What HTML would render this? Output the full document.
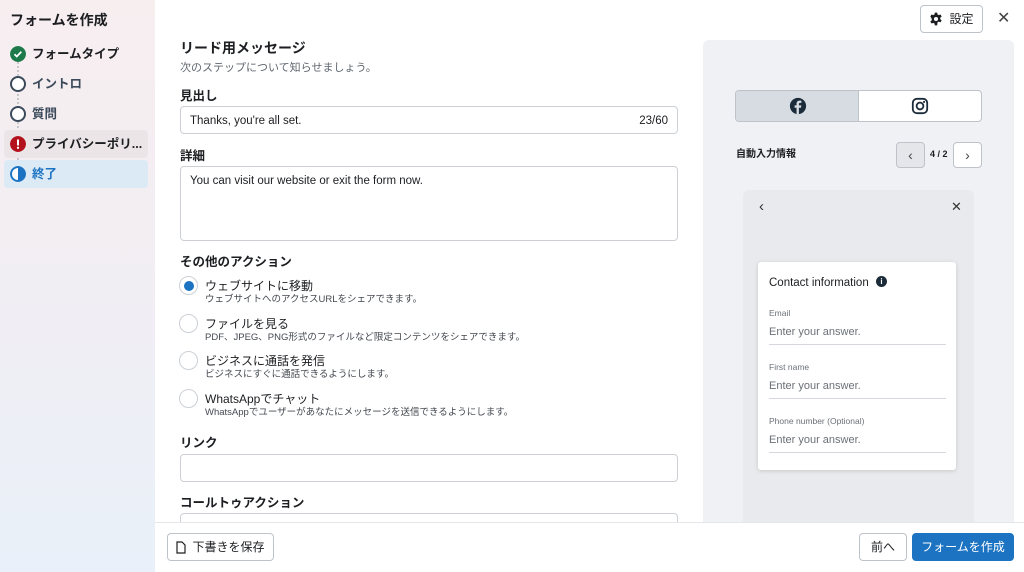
<!DOCTYPE html>
<html><head><meta charset="utf-8"><style>
*{box-sizing:border-box;margin:0;padding:0}
body{width:1024px;height:572px;overflow:hidden;background:#fff;font-family:"Liberation Sans","Noto Sans CJK JP",sans-serif;color:#1c1e21;position:relative;line-height:1.2}
.abs{position:absolute}
.side{left:0;top:0;width:155px;height:572px;background:linear-gradient(180deg,#f7eef0 0%,#f1eef3 50%,#e9f0f9 100%)}
.side h1{position:absolute;left:10px;top:11px;font-size:14px;font-weight:bold;line-height:18px}
.step{position:absolute;left:4px;width:144px;height:28px;font-size:12.5px;font-weight:bold;color:#1c1e21;border-radius:4px;line-height:28px;padding-left:28px}
.step .ic{position:absolute;left:6px;top:6px;width:16px;height:16px;border-radius:50%}
.in{border:2px solid #3b4a5a;background:#fff}
.lbl{font-size:12.5px;font-weight:bold;line-height:15px}
.inp{border:1px solid #ccd0d5;border-radius:4px;background:#fff}
.radio{width:19px;height:19px;border-radius:50%;border:1px solid #ccd0d5;background:#fff}
.rt{font-size:12px;color:#1c1e21;line-height:14px}
.rs{font-size:9.5px;color:#444950;margin-top:1px;line-height:12px}
.btn{border:1px solid #bec3c9;border-radius:4px;background:#fff;font-size:12px;display:flex;align-items:center;justify-content:center}
.fl{font-size:8.5px;color:#6b7178}
.ph{font-size:11px;color:#6b7178}
.ln{height:1px;background:#d5d8dc}
</style></head><body>
<div class="abs side">
<h1>フォームを作成</h1>
<div class="abs" style="left:17px;top:62px;height:110px;border-left:2px dotted #c8c8cc"></div>
<div class="step" style="top:40px"><svg class="ic" viewBox="0 0 16 16"><circle cx="8" cy="8" r="8" fill="#1f7a4b"/><path d="M4.5 8.2l2.3 2.3 4.5-4.8" fill="none" stroke="#fff" stroke-width="1.8"/></svg>フォームタイプ</div>
<div class="step" style="top:70px;color:#3b4a5a"><div class="ic in"></div>イントロ</div>
<div class="step" style="top:100px;color:#3b4a5a"><div class="ic in"></div>質問</div>
<div class="step" style="top:130px;background:#ebe5e8"><svg class="ic" viewBox="0 0 16 16"><circle cx="8" cy="8" r="8" fill="#b3121d"/><rect x="7" y="3.5" width="2" height="6" fill="#fff"/><rect x="7" y="10.8" width="2" height="2" fill="#fff"/></svg>プライバシーポリ...</div>
<div class="step" style="top:160px;background:#dceaf6;color:#1b73c2"><svg class="ic" viewBox="0 0 16 16"><circle cx="8" cy="8" r="7" fill="#fff" stroke="#1b73c2" stroke-width="2"/><path d="M8 1a7 7 0 010 14z" fill="#1b73c2"/></svg>終了</div>
</div>

<div class="abs" style="left:180px;top:40px;font-size:14px;font-weight:bold;line-height:17px">リード用メッセージ</div>
<div class="abs" style="left:180px;top:62px;font-size:11px;color:#606770;line-height:13px">次のステップについて知らせましょう。</div>
<div class="abs lbl" style="left:180px;top:89px">見出し</div>
<div class="abs inp" style="left:180px;top:106px;width:498px;height:28px;font-size:11.5px;padding:8px 9px">Thanks, you're all set.<span style="position:absolute;right:9px;top:8px">23/60</span></div>
<div class="abs lbl" style="left:180px;top:149px">詳細</div>
<div class="abs inp" style="left:180px;top:166px;width:498px;height:75px;font-size:11.5px;padding:8px 9px">You can visit our website or exit the form now.</div>
<div class="abs lbl" style="left:180px;top:255px">その他のアクション</div>

<div class="abs radio" style="left:179px;top:276px;display:flex;align-items:center;justify-content:center"><div style="width:10px;height:10px;border-radius:50%;background:#1b73c2"></div></div>
<div class="abs" style="left:205px;top:279px"><div class="rt">ウェブサイトに移動</div><div class="rs">ウェブサイトへのアクセスURLをシェアできます。</div></div>
<div class="abs radio" style="left:179px;top:314px"></div>
<div class="abs" style="left:205px;top:317px"><div class="rt">ファイルを見る</div><div class="rs">PDF、JPEG、PNG形式のファイルなど限定コンテンツをシェアできます。</div></div>
<div class="abs radio" style="left:179px;top:351px"></div>
<div class="abs" style="left:205px;top:354px"><div class="rt">ビジネスに通話を発信</div><div class="rs">ビジネスにすぐに通話できるようにします。</div></div>
<div class="abs radio" style="left:179px;top:389px"></div>
<div class="abs" style="left:205px;top:392px"><div class="rt">WhatsAppでチャット</div><div class="rs">WhatsAppでユーザーがあなたにメッセージを送信できるようにします。</div></div>

<div class="abs lbl" style="left:180px;top:436px">リンク</div>
<div class="abs inp" style="left:180px;top:454px;width:498px;height:28px"></div>
<div class="abs lbl" style="left:180px;top:496px">コールトゥアクション</div>
<div class="abs inp" style="left:180px;top:513px;width:498px;height:28px"></div>

<div class="abs btn" style="left:920px;top:5px;width:63px;height:28px;gap:6px"><svg width="14" height="14" viewBox="0 0 24 24"><path fill="#1c1e21" fill-rule="evenodd" d="M10 1h4l.6 3.2a8 8 0 012 1.2l3.1-1.1 2 3.4-2.5 2.1a8 8 0 010 2.4l2.5 2.1-2 3.4-3.1-1.1a8 8 0 01-2 1.2L14 23h-4l-.6-3.2a8 8 0 01-2-1.2l-3.1 1.1-2-3.4 2.5-2.1a8 8 0 010-2.4L2.3 7.7l2-3.4 3.1 1.1a8 8 0 012-1.2zM12 8.5a3.5 3.5 0 100 7 3.5 3.5 0 000-7z"/></svg>設定</div>
<div class="abs" style="left:997px;top:9px;font-size:16px;color:#444">✕</div>

<div class="abs" style="left:703px;top:40px;width:311px;height:490px;background:#eff1f4;border-radius:6px"></div>
<div class="abs" style="left:735px;top:90px;width:247px;height:32px;border:1px solid #bec3c9;border-radius:4px;background:#fff;overflow:hidden">
<div style="position:absolute;left:0;top:0;width:123px;height:30px;background:#d7dce2;border-right:1px solid #bec3c9"></div>
<svg style="position:absolute;left:53px;top:6px" width="18" height="18" viewBox="0 0 20 20"><circle cx="10" cy="10" r="9" fill="#1c2b39"/><path d="M11 19v-7h2.3l.4-2.7H11V7.8c0-.8.3-1.3 1.4-1.3h1.4V4.1c-.3 0-1.1-.1-2-.1-2 0-3.4 1.2-3.4 3.4v1.9H6.2V12h2.2v7z" fill="#d7dce2"/></svg>
<svg style="position:absolute;left:175px;top:6px" width="18" height="18" viewBox="0 0 20 20"><rect x="2" y="2" width="16" height="16" rx="4.5" fill="none" stroke="#1c2b39" stroke-width="2"/><circle cx="10" cy="10" r="3.8" fill="none" stroke="#1c2b39" stroke-width="2"/><circle cx="14.5" cy="5.5" r="1.2" fill="#1c2b39"/></svg>
</div>
<div class="abs" style="left:736px;top:149px;font-size:10px;font-weight:bold">自動入力情報</div>
<div class="abs btn" style="left:896px;top:142px;width:29px;height:26px;background:#e4e6ea;font-size:14px;color:#444">‹</div>
<div class="abs" style="left:930px;top:149px;font-size:9px;font-weight:bold">4 / 2</div>
<div class="abs btn" style="left:953px;top:142px;width:29px;height:26px;font-size:14px;color:#444">›</div>

<div class="abs" style="left:743px;top:190px;width:231px;height:340px;background:#e9eaed;border-radius:6px"></div>
<div class="abs" style="left:759px;top:198px;font-size:15px;color:#333">‹</div>
<div class="abs" style="left:951px;top:199px;font-size:13px;color:#333">✕</div>
<div class="abs" style="left:758px;top:262px;width:198px;height:208px;background:#fff;border-radius:3px;box-shadow:0 1px 4px rgba(0,0,0,.15)">
<div class="abs" style="left:11px;top:15px;font-size:11.5px;color:#1c1e21">Contact information</div>
<div class="abs" style="left:118px;top:14px;width:11px;height:11px;border-radius:50%;background:#1c2b39;color:#fff;font-size:8px;font-weight:bold;text-align:center;line-height:11px">i</div>
<div class="abs fl" style="left:11px;top:46px">Email</div>
<div class="abs ph" style="left:11px;top:64px">Enter your answer.</div>
<div class="abs ln" style="left:11px;top:82px;width:177px"></div>
<div class="abs fl" style="left:11px;top:100px">First name</div>
<div class="abs ph" style="left:11px;top:118px">Enter your answer.</div>
<div class="abs ln" style="left:11px;top:136px;width:177px"></div>
<div class="abs fl" style="left:11px;top:154px">Phone number (Optional)</div>
<div class="abs ph" style="left:11px;top:172px">Enter your answer.</div>
<div class="abs ln" style="left:11px;top:190px;width:177px"></div>
</div>

<div class="abs" style="left:155px;top:522px;width:869px;height:50px;background:#fff;border-top:1px solid #e4e6ea"></div>
<div class="abs btn" style="left:167px;top:533px;width:107px;height:28px;gap:6px;color:#1c1e21"><svg width="10" height="13" viewBox="0 0 10 13"><path d="M1 1h5l3 3v8H1z" fill="none" stroke="#1c1e21" stroke-width="1.2"/></svg>下書きを保存</div>
<div class="abs btn" style="left:859px;top:533px;width:48px;height:28px">前へ</div>
<div class="abs btn" style="left:912px;top:533px;width:102px;height:28px;background:#1b73c2;border-color:#1b73c2;color:#fff">フォームを作成</div>
</body></html>
